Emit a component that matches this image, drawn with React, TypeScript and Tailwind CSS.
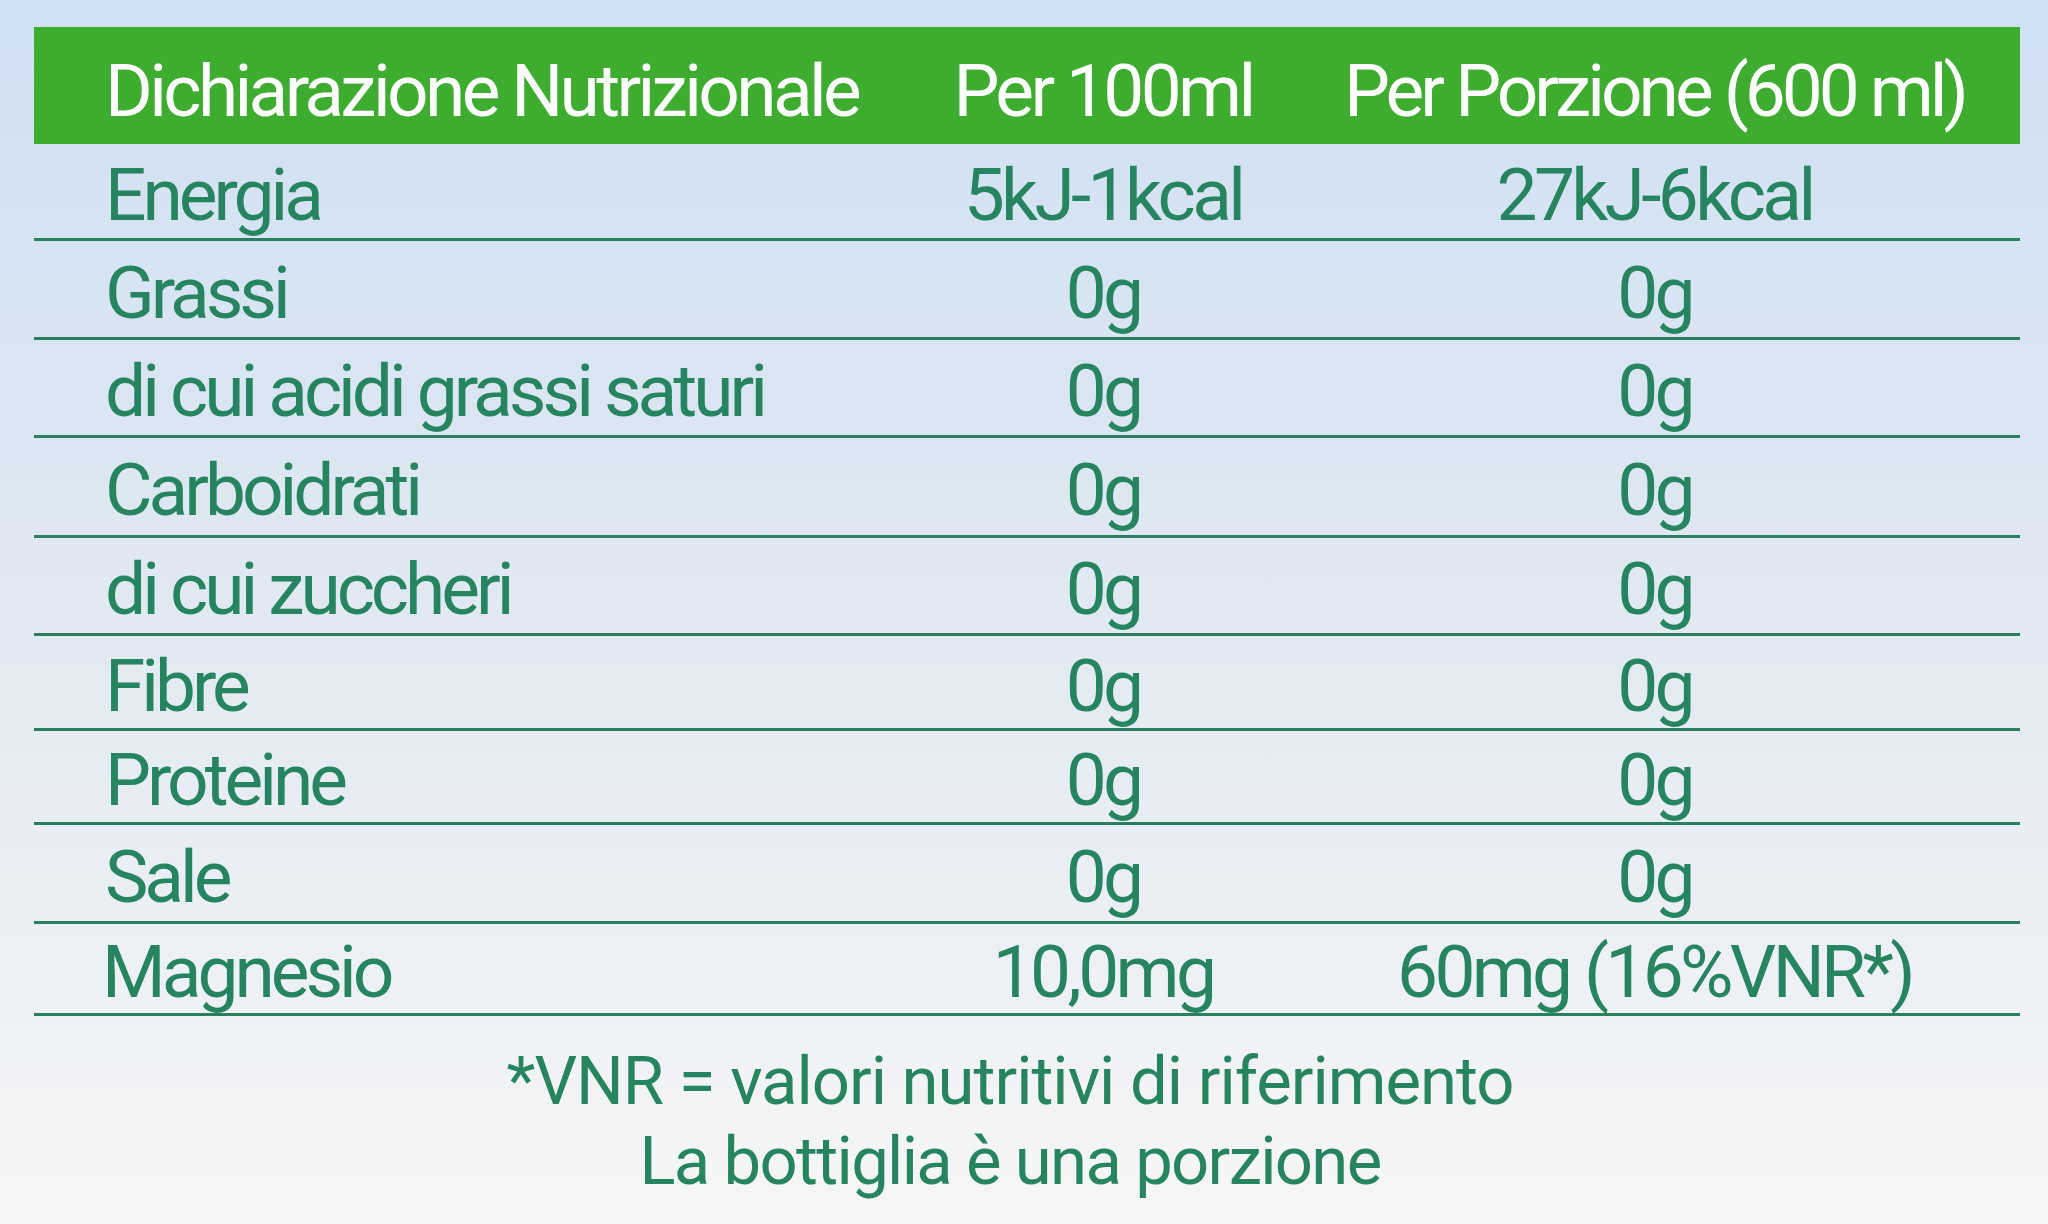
const ROWS: { label: string; per100: string; portion: string; h: string }[] = [
  { label: 'Energia', per100: '5kJ-1kcal', portion: '27kJ-6kcal', h: 'h-[97px]' },
  { label: 'Grassi', per100: '0g', portion: '0g', h: 'h-[99px]' },
  { label: 'di cui acidi grassi saturi', per100: '0g', portion: '0g', h: 'h-[98px]' },
  { label: 'Carboidrati', per100: '0g', portion: '0g', h: 'h-[100px]' },
  { label: 'di cui zuccheri', per100: '0g', portion: '0g', h: 'h-[98px]' },
  { label: 'Fibre', per100: '0g', portion: '0g', h: 'h-[95px]' },
  { label: 'Proteine', per100: '0g', portion: '0g', h: 'h-[94px]' },
  { label: 'Sale', per100: '0g', portion: '0g', h: 'h-[99px]' },
  { label: 'Magnesio', per100: '10,0mg', portion: '60mg (16%VNR*)', h: 'h-[92px]' },
];

const App = () => {
  return (
    <div className="h-screen w-full overflow-hidden bg-linear-to-b from-[#cfe0f3] via-[#e1e9f2] to-[#f6f6f6] pt-[27px] pl-[34px] font-['Roboto','Liberation_Sans',sans-serif]">
      <div className="w-[1986px]">
        {/* header */}
        <div className="grid h-[117px] grid-cols-[883px_372px_731px] items-center bg-[#3dac2f] pt-[12px] text-[73px] leading-none tracking-[-0.05em] text-white">
          <div className="pl-[71px] whitespace-nowrap">Dichiarazione Nutrizionale</div>
          <div className="text-center whitespace-nowrap">Per 100ml</div>
          <div className="text-center whitespace-nowrap tracking-[-0.055em]">Per Porzione (600 ml)</div>
        </div>

        {ROWS.map(row => (
          <div
            key={row.label}
            className={`grid ${row.h} grid-cols-[883px_372px_731px] items-center border-b-[3px] border-[#2a7f5e] pt-[8px] text-[73px] leading-none tracking-[-0.05em] text-[#268560]`}
          >
            <div className={row.label === 'Magnesio' ? 'pl-[68px] whitespace-nowrap tracking-[-0.055em]' : 'pl-[71px] whitespace-nowrap tracking-[-0.055em]'}>
              {row.label}
            </div>
            <div className="text-center whitespace-nowrap">{row.per100}</div>
            <div className="text-center whitespace-nowrap">{row.portion}</div>
          </div>
        ))}

        <div className="mt-[25px] pr-[34px] text-center text-[67px] leading-[80px] text-[#268560]">
          <p className="tracking-[-0.015em]">*VNR = valori nutritivi di riferimento</p>
          <p className="tracking-[-0.025em]">La bottiglia è una porzione</p>
        </div>
      </div>
    </div>
  );
};

export default App;
